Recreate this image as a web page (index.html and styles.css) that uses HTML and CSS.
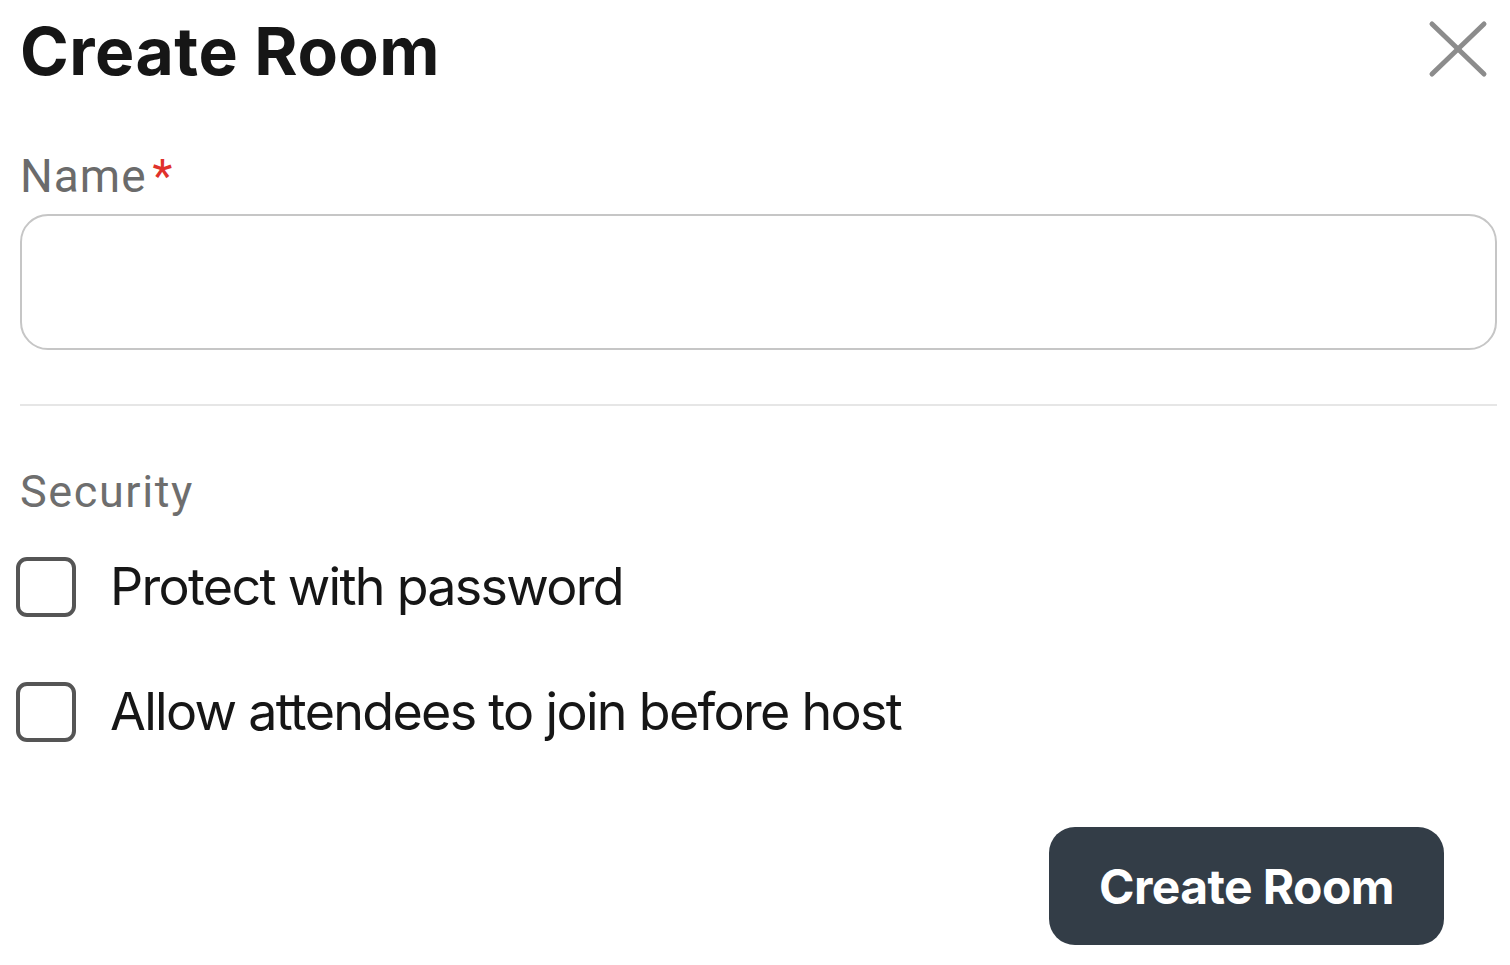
FILE: index.html
```html
<!DOCTYPE html>
<html lang="en">
<head>
<meta charset="utf-8">
<title>Create Room</title>
<link rel="stylesheet" href="styles.css">
</head>
<body>
<div class="dialog">
  <div class="dialog-header">
    <h1 class="dialog-title">Create Room</h1>
    <button class="close-btn" aria-label="Close">
      <svg width="64" height="64" viewBox="0 0 64 64" fill="none" stroke="#8c8c8c" stroke-width="5" stroke-linecap="round">
        <line x1="6" y1="7" x2="58" y2="57"/>
        <line x1="58" y1="7" x2="6" y2="57"/>
      </svg>
    </button>
  </div>

  <label class="field-label" for="room-name">Name<span class="required">*</span></label>
  <input class="text-input" id="room-name" type="text">

  <div class="divider"></div>

  <div class="section-label">Security</div>

  <label class="check-row first">
    <span class="checkbox"></span>
    <span class="check-text">Protect with password</span>
  </label>
  <label class="check-row second">
    <span class="checkbox"></span>
    <span class="check-text">Allow attendees to join before host</span>
  </label>

  <div class="dialog-footer">
    <button class="primary-btn">Create Room</button>
  </div>
</div>
</body>
</html>
```

FILE: styles.css
```css
* {
  box-sizing: border-box;
}

html, body {
  margin: 0;
  padding: 0;
  background: #ffffff;
}

body {
  font-family: "Inter", "Liberation Sans", sans-serif;
  color: #1a1a1a;
}

.dialog {
  width: 1510px;
  padding: 0 13px 0 20px;
}

.dialog-header {
  display: flex;
  justify-content: space-between;
  align-items: flex-start;
  padding-top: 11px;
  height: 91px;
}

.dialog-title {
  margin: 0;
  font-family: "Inter", sans-serif;
  font-weight: 700;
  font-size: 66px;
  line-height: 80px;
  letter-spacing: 0.5px;
  color: #161616;
}

.close-btn {
  margin: 6px 7px 0 0;
  padding: 0;
  border: none;
  background: none;
  width: 64px;
  height: 64px;
  display: block;
}

.close-btn svg {
  display: block;
}

.field-label {
  display: block;
  margin-top: 57px;
  font-family: "Roboto", "Liberation Sans", sans-serif;
  font-size: 46px;
  line-height: 56px;
  letter-spacing: 1px;
  color: #6b6b6b;
}

.required {
  color: #e0312b;
  margin-left: 6px;
}

.text-input {
  display: block;
  width: 100%;
  height: 136px;
  margin-top: 10px;
  border: 2px solid #c6c6c6;
  border-radius: 28px;
  background: #fff;
  font-size: 46px;
  padding: 0 24px;
  outline: none;
}

.divider {
  margin-top: 54px;
  height: 2px;
  background: #e6e6e6;
}

.section-label {
  margin-top: 58px;
  font-family: "Roboto", "Liberation Sans", sans-serif;
  font-size: 45px;
  line-height: 56px;
  letter-spacing: 1.6px;
  color: #6e6e6e;
}

.check-row {
  display: flex;
  align-items: center;
  height: 60px;
  margin-left: -4px;
}

.check-row.first {
  margin-top: 37px;
}

.check-row.second {
  margin-top: 65px;
}

.checkbox {
  flex: none;
  width: 60px;
  height: 60px;
  border: 4px solid #555555;
  border-radius: 11px;
}

.check-text {
  margin-left: 34px;
  font-family: "Inter", sans-serif;
  font-size: 52px;
  line-height: 60px;
  letter-spacing: -1.7px;
  color: #161616;
}

.dialog-footer {
  display: flex;
  justify-content: flex-end;
  margin-top: 85px;
  padding-right: 53px;
}

.primary-btn {
  width: 395px;
  height: 118px;
  border: none;
  border-radius: 26px;
  background: #333d47;
  color: #ffffff;
  font-family: "Inter", sans-serif;
  font-weight: 700;
  font-size: 48px;
  letter-spacing: -0.6px;
  padding: 0;
}
```
